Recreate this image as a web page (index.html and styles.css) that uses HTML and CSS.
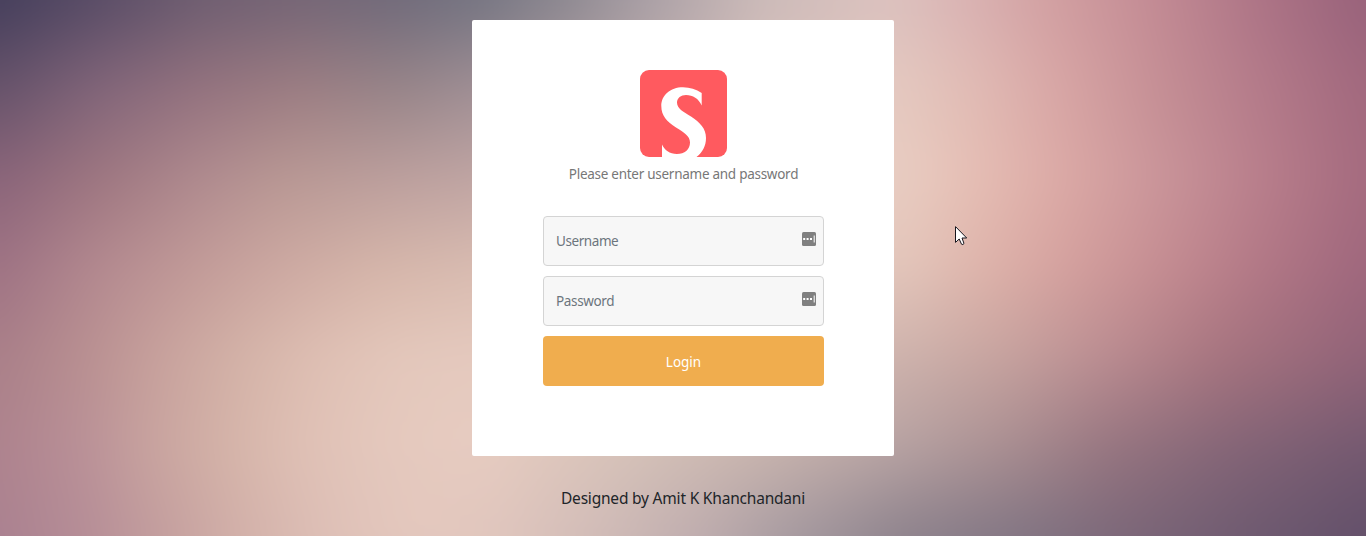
FILE: index.html
```html
<!DOCTYPE html>
<html lang="en">
<head>
<meta charset="utf-8">
<title>Login</title>
<link rel="stylesheet" href="styles.css">
</head>
<body>
<div class="page">
  <div class="backdrop" aria-hidden="true">
    <div class="tone tone-1"></div>
    <div class="tone tone-2"></div>
    <div class="tone tone-3"></div>
    <div class="tone tone-4"></div>
    <div class="tone tone-5"></div>
    <div class="tone tone-6"></div>
    <div class="tone tone-7"></div>
  </div>
  <main class="content">
    <form class="card">
      <svg class="logo" viewBox="0 0 87 87" aria-label="Logo">
        <defs><clipPath id="tile"><rect width="87" height="87" rx="9"/></clipPath></defs>
        <g clip-path="url(#tile)">
          <rect width="87" height="87" fill="#ff5a5f"/>
          <path fill="#fff" d="M61.700 23C56 19.500 50 17.300 43 17.300C30 17.300 21.300 25.500 21.300 36C21.300 46 27 51.500 36 57.500C44 62.500 50 66 50 72.500C50 79.500 44.500 84 37 84C29.500 84 24.500 80 22 74.500V87H56.500C62.500 82.500 66 76 66 68C66 58.500 60 52.500 51 46.500C43 41.500 37 38.500 37 32.500C37 28 41 25 46 25C53 25 58.500 28.500 61.700 35.500Z"/>
        </g>
      </svg>
      <p class="hint">Please enter username and password</p>
      <div class="field">
        <input class="input input-user" type="text" placeholder="Username">
        <svg class="key" viewBox="0 0 14 14"><rect width="14" height="14" rx="1.500" fill="#808080"/><path fill="#fff" d="M1.200 6h2v2h-2zM4.600 6h2v2h-2zM8 6h2v2H8zM11.700 3.500h1v7h-1z"/></svg>
      </div>
      <div class="field">
        <input class="input" type="password" placeholder="Password">
        <svg class="key" viewBox="0 0 14 14"><rect width="14" height="14" rx="1.500" fill="#808080"/><path fill="#fff" d="M1.200 6h2v2h-2zM4.600 6h2v2h-2zM8 6h2v2H8zM11.700 3.500h1v7h-1z"/></svg>
      </div>
      <button class="login" type="button">Login</button>
    </form>
    <p class="credit">Designed by Amit K Khanchandani</p>
  </main>
  <svg class="cursor" viewBox="0 0 13 20"><path d="M.5.6V16.400L4.200 13L6.500 18.200Q8 19.200 9 17.500L7 12H11.700Z" fill="#fff" stroke="#17151d"/></svg>
</div>
</body>
</html>
```
FILE: styles.css
```css
* { box-sizing: border-box; }
body {
  margin: 0;
  background: #fff;
  font-family: "Noto Sans", "Open Sans", sans-serif;
  overflow: hidden;
}
.page { position: relative; height: 536px; overflow: hidden; }

/* Each tone is a horizontal blend that fades in below the previous one.
   The backdrop bleeds 60px past the page so the blur keeps solid edges. */
.backdrop { position: absolute; inset: -60px; filter: blur(20px); }
.tone {
  position: absolute;
  inset: 0;
  background-repeat: no-repeat;
  background-position: 60px 0;
  background-size: 1430px 100%;
  -webkit-mask-image: linear-gradient(to bottom, transparent calc(var(--from) + 60px), #000 calc(var(--to) + 60px));
  mask-image: linear-gradient(to bottom, transparent calc(var(--from) + 60px), #000 calc(var(--to) + 60px));
}
.tone-1 {
  -webkit-mask-image: none;
  mask-image: none;
  background-color: #453f5c;
  background-image: linear-gradient(to right, #453f5c 0, #5a4d67 100px, #6f5e71 200px, #766676 300px, #716b7b 400px, #757582 480px, #8b8790 560px, #aaa0a6 650px, #cbbab9 760px, #dcc2bf 890px, #dab4b4 960px, #d2a0a2 1050px, #c48c95 1150px, #ad7486 1260px, #98627b 1366px);
}
.tone-2 {
  --from: 0px; --to: 90px;
  background-color: #67536b;
  background-image: linear-gradient(to right, #67536b 0, #83667a 100px, #95737f 200px, #9d7e83 300px, #988589 400px, #a08f95 480px, #d9c3bc 760px, #e5cac1 890px, #e1bcb5 970px, #d8a6a5 1060px, #c58f95 1160px, #b47b8a 1260px, #a2697e 1366px);
}
.tone-3 {
  --from: 90px; --to: 180px;
  background-color: #8b657a;
  background-image: linear-gradient(to right, #8b657a 0, #9f7781 100px, #b08b8f 200px, #b99894 280px, #bda09e 400px, #c0a5a3 480px, #e4ccc1 760px, #e9cdc2 900px, #e6bfb5 970px, #dcaaa6 1060px, #ca959a 1160px, #b97f8c 1260px, #a56b7f 1366px);
}
.tone-4 {
  --from: 180px; --to: 270px;
  background-color: #9f7384;
  background-image: linear-gradient(to right, #9f7384 0, #b48a90 100px, #c39c99 200px, #cda9a2 280px, #d6b6aa 380px, #d9bcb1 480px, #dfc6ba 760px, #e3c6bb 900px, #deb4ab 980px, #d5a29f 1060px, #c58d92 1160px, #b27886 1260px, #9f677d 1366px);
}
.tone-5 {
  --from: 270px; --to: 360px;
  background-color: #aa8089;
  background-image: linear-gradient(to right, #aa8089 0, #ba9192 90px, #c8a29d 160px, #d4b3a8 240px, #dfc0b4 320px, #e4c8bc 400px, #e5cabf 480px, #d8bfb5 760px, #cdb2ac 900px, #c6a39f 1000px, #b98b90 1110px, #a6747f 1220px, #916378 1366px);
}
.tone-6 {
  --from: 360px; --to: 450px;
  background-color: #ae838e;
  background-image: linear-gradient(to right, #ae838e 0, #ba9198 85px, #c8a39f 150px, #d5b4a9 230px, #dfc0b5 300px, #e4c8bd 380px, #e7ccc1 480px, #d4c1b8 640px, #c8b4ae 760px, #b7a3a3 890px, #a98f92 1000px, #967580 1110px, #846577 1230px, #745970 1366px);
}
.tone-7 {
  --from: 450px; --to: 536px;
  background-color: #aa8190;
  background-image: linear-gradient(to right, #aa8190 0, #b68e97 90px, #c5a09f 170px, #d2b0a9 240px, #dec0b7 330px, #e4c8be 420px, #dfc5bd 500px, #d0bbb7 600px, #beacae 700px, #a69aa0 790px, #8e838d 900px, #827583 1020px, #7b6678 1130px, #6e5a70 1250px, #63506a 1366px);
}

.content { position: relative; display: flex; flex-direction: column; align-items: center; padding-top: 20px; }
.card {
  width: 422px;
  height: 436px;
  padding: 50px 70px 0 71px;
  background: #fff;
  border-radius: 2px;
  display: flex;
  flex-direction: column;
}
.logo { width: 87px; height: 87px; align-self: center; display: block; }
.hint { margin: 6px 0 31px; font-size: 13.5px; letter-spacing: -0.27px; line-height: 22px; color: #777; text-align: center; white-space: nowrap; }
.field { height: 50px; margin-bottom: 10px; position: relative; }
.input {
  display: block;
  width: 100%;
  height: 50px;
  padding: 0 12px;
  border: 1px solid #d4d4d4;
  border-radius: 4px;
  background: #f7f7f7;
  font: 13.5px "Noto Sans", "Open Sans", sans-serif;
  letter-spacing: -0.35px;
}
.input-user { letter-spacing: -0.42px; }
.input::placeholder { color: #6c757d; opacity: 1; }
.key { position: absolute; top: 16px; right: 8px; width: 14px; height: 14px; }
.login {
  height: 50px;
  padding: 1px 0 0;
  border: 0;
  border-radius: 4px;
  background: #f0ad4e;
  color: #fff;
  font: 13.5px "Noto Sans", "Open Sans", sans-serif;
}
.credit { margin: 30px 0 0; font-size: 15.5px; letter-spacing: -0.2px; line-height: 24px; color: #212529; white-space: nowrap; }
.cursor { position: absolute; left: 955px; top: 226px; width: 13px; height: 20px; }
```
